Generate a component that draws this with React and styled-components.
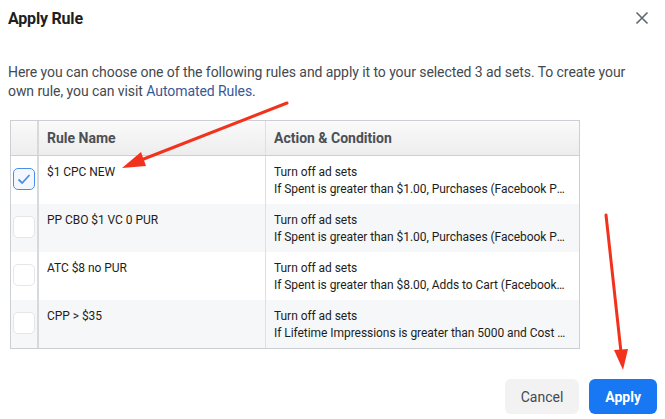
import React from "react";
import styled, { createGlobalStyle } from "styled-components";

const GlobalStyle = createGlobalStyle`
  body {
    margin: 0;
    background: #ffffff;
    font-family: Roboto, "Liberation Sans", sans-serif;
  }
`;

const Dialog = styled.div`
  position: relative;
  width: 665px;
  height: 419px;
  background: #ffffff;
  display: flex;
  flex-direction: column;
  overflow: hidden;
`;

const Header = styled.div`
  display: flex;
  align-items: center;
  justify-content: space-between;
  height: 36px;
  padding: 0 16px 0 8px;
`;

const Title = styled.h1`
  margin: 0;
  font-size: 16px;
  font-weight: 700;
  color: #1c1e21;
  letter-spacing: -0.2px;
`;

const Close = styled.button`
  border: 0;
  background: none;
  padding: 0;
  width: 14px;
  height: 14px;
  display: flex;
  color: #606770;
`;

const Intro = styled.p`
  margin: 27px 0 0;
  padding: 0 25px 0 8px;
  font-size: 14px;
  line-height: 19px;
  letter-spacing: -0.07px;
  color: #444950;

  a {
    color: #385898;
    text-decoration: none;
  }
`;

const Table = styled.div`
  margin: 19px 0 0 10px;
  width: 568px;
  border: 1px solid #ccd0d5;
`;

const Row = styled.div`
  display: grid;
  grid-template-columns: 28px 226px 1fr;
  height: ${(p) => (p.$head ? "34px" : "48px")};
  background: ${(p) =>
    p.$head
      ? "linear-gradient(#fafafa, #ededed)"
      : p.$striped
      ? "#f6f7f9"
      : "#ffffff"};
  border-bottom: ${(p) => (p.$head ? "1px solid #ccd0d5" : "0")};
`;

const BoxCell = styled.div`
  border-right: 2px solid #d7d9dc;
  display: flex;
  justify-content: center;
  padding-top: 12px;
  box-sizing: border-box;
`;

const Cell = styled.div`
  padding: ${(p) => (p.$head ? "0 8px" : "8px 12px 0 8px")};
  display: flex;
  flex-direction: column;
  justify-content: ${(p) => (p.$head ? "center" : "flex-start")};
  border-left: ${(p) => (p.$divider ? "1px solid #dddfe2" : "0")};
  font-size: ${(p) => (p.$head ? "14px" : "12px")};
  font-weight: ${(p) => (p.$head ? 700 : 400)};
  color: ${(p) => (p.$head ? "#4b4f56" : "#1c1e21")};
  line-height: 17px;
  min-width: 0;
`;

const Line = styled.span`
  white-space: nowrap;
  overflow: hidden;
  text-overflow: ellipsis;
  letter-spacing: -0.05px;
`;

const Check = styled.span`
  width: 22px;
  height: 22px;
  border-radius: 5px;
  box-sizing: border-box;
  border: ${(p) => (p.$on ? "1.5px solid #4a8fe7" : "1px solid #e4e6e9")};
  background: ${(p) => (p.$on ? "#f4f8fe" : "#ffffff")};
  display: flex;
  align-items: center;
  justify-content: center;
`;

const Footer = styled.div`
  margin-top: auto;
  display: flex;
  justify-content: flex-end;
  gap: 10px;
  padding: 0 8px 5px 0;
`;

const Button = styled.button`
  height: 35px;
  padding: 0 16px;
  border: 0;
  border-radius: 6px;
  font-family: inherit;
  font-size: 14px;
  font-weight: ${(p) => (p.$primary ? 700 : 400)};
  background: ${(p) => (p.$primary ? "#1877f2" : "#f2f2f2")};
  color: ${(p) => (p.$primary ? "#ffffff" : "#444950")};
`;

const Arrows = styled.svg`
  position: absolute;
  left: 0;
  top: 0;
  pointer-events: none;
`;

const rules = [
  {
    name: "$1 CPC NEW",
    cond: "If Spent is greater than $1.00, Purchases (Facebook Pixel) is less than 1",
    on: true,
  },
  {
    name: "PP CBO $1 VC 0 PUR",
    cond: "If Spent is greater than $1.00, Purchases (Facebook Pixel) is less than 1",
  },
  {
    name: "ATC $8 no PUR",
    cond: "If Spent is greater than $8.00, Adds to Cart (Facebook Pixel) is less than 1",
  },
  {
    name: "CPP > $35",
    cond: "If Lifetime Impressions is greater than 5000 and Cost per Purchase",
  },
];

export default function App() {
  return (
    <>
      <GlobalStyle />
      <Dialog>
        <Header>
          <Title>Apply Rule</Title>
          <Close aria-label="Close">
            <svg width="14" height="14" viewBox="0 0 14 14">
              <path d="M1.5 1.5 L12.5 12.5 M12.5 1.5 L1.5 12.5" stroke="currentColor" strokeWidth="1.6" />
            </svg>
          </Close>
        </Header>
        <Intro>
          Here you can choose one of the following rules and apply it to your selected 3 ad sets. To create your
          own rule, you can visit <a href="#">Automated Rules</a>.
        </Intro>
        <Table>
          <Row $head>
            <BoxCell />
            <Cell $head>Rule Name</Cell>
            <Cell $head $divider>Action &amp; Condition</Cell>
          </Row>
          {rules.map((r, i) => (
            <Row key={r.name} $striped={i % 2 === 1}>
              <BoxCell>
                <Check $on={r.on}>
                  {r.on && (
                    <svg width="14" height="12" viewBox="0 0 14 12">
                      <path d="M1.5 6.5 L5.2 10 L12.5 2" fill="none" stroke="#4a8fe7" strokeWidth="1.8" />
                    </svg>
                  )}
                </Check>
              </BoxCell>
              <Cell>
                <Line>{r.name}</Line>
              </Cell>
              <Cell $divider>
                <Line>Turn off ad sets</Line>
                <Line>{r.cond}</Line>
              </Cell>
            </Row>
          ))}
        </Table>
        <Footer>
          <Button>Cancel</Button>
          <Button $primary>Apply</Button>
        </Footer>
        <Arrows width="665" height="419">
          <g stroke="#f2321c" strokeWidth="3" strokeLinecap="round">
            <line x1="287" y1="103" x2="136" y2="162" />
            <line x1="606" y1="215" x2="621" y2="352" />
          </g>
          <g fill="#f2321c">
            <polygon points="122,168 141,152 146,166" />
            <polygon points="623,370 614,350 628,349" />
          </g>
        </Arrows>
      </Dialog>
    </>
  );
}
